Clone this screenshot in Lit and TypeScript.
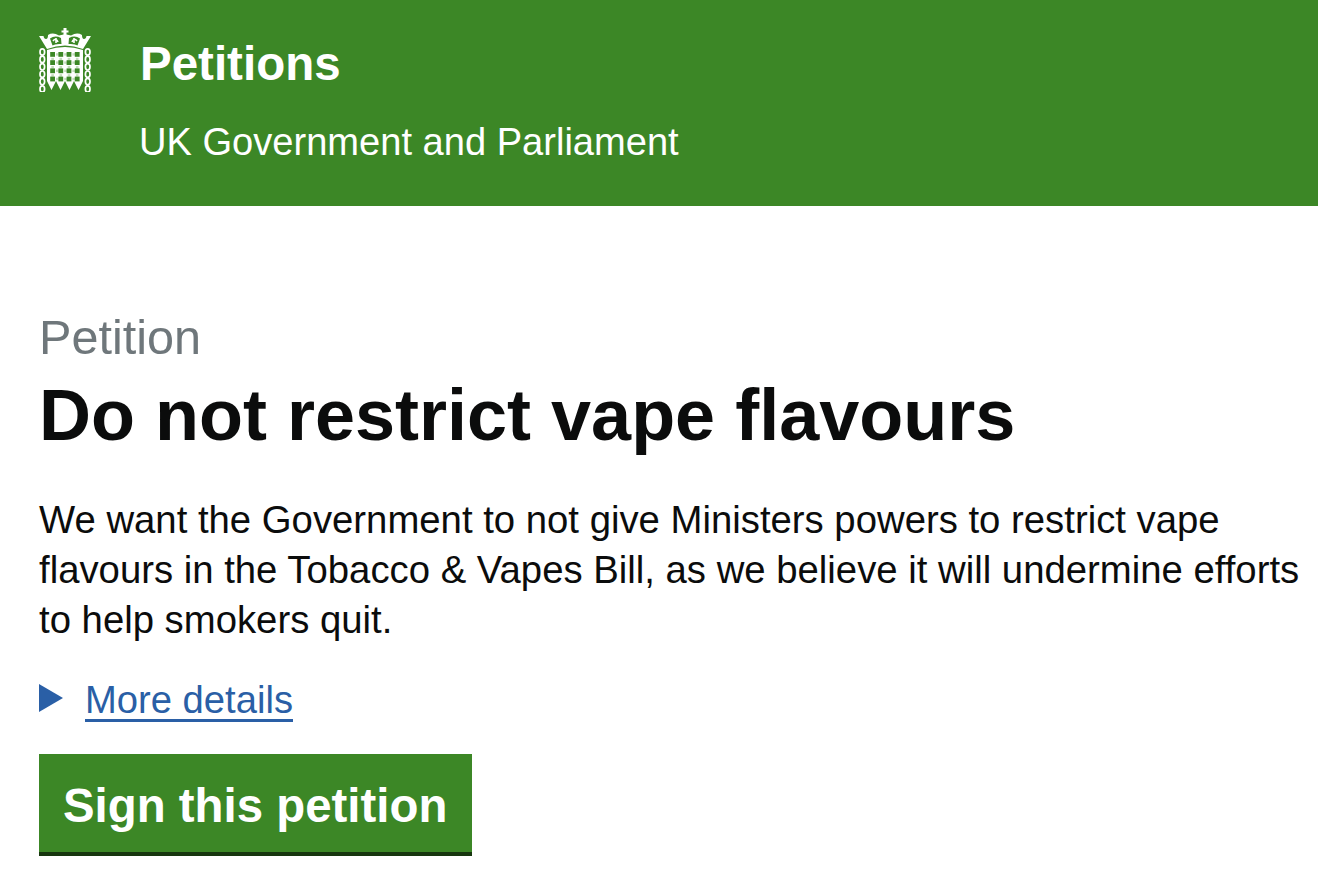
import { LitElement, html, css, svg } from "lit";
import { customElement } from "lit/decorators.js";

const G = "#3c8726";

const holes = () => {
  const out = [];
  for (let r = 0; r < 4; r++) {
    for (let c = 0; c < 4; c++) {
      out.push(svg`<rect x="${11.2 + c * 8.2}" y="${24 + r * 8.2}" width="4.8" height="4.8" fill="${G}"/>`);
    }
  }
  for (let r = 0; r < 4; r++) {
    for (let c = 0; c < 3; c++) {
      out.push(svg`<rect x="${17 + c * 8.2}" y="${25.2 + r * 8.2}" width="2.6" height="2.4" fill="${G}" opacity=".3"/>`);
    }
  }
  for (let r = 0; r < 3; r++) {
    for (let c = 0; c < 4; c++) {
      out.push(svg`<rect x="${12.3 + c * 8.2}" y="${29.8 + r * 8.2}" width="2.6" height="2.4" fill="${G}" opacity=".3"/>`);
    }
  }
  return out;
};

const chain = (x: number) => {
  const out = [];
  for (let i = 0; i < 6; i++) {
    out.push(svg`<ellipse cx="${x}" cy="${24 + i * 7.4}" rx="2.3" ry="3.2" fill="none" stroke="#fff" stroke-width="1.7"/>`);
  }
  return out;
};

const logo = html`<svg class="logo" viewBox="0 0 52 64" width="52" height="64" aria-hidden="true">
  <path fill="#fff" d="M8 22 Q26 16 44 22 V53 L39.5 62 L35 53 L30.5 62 L26 53 L21.5 62 L17 53 L12.5 62 L8 53 Z"/>
  ${holes()}
  ${chain(3.3)}
  ${chain(48.7)}
  <path fill="#fff" d="M0 8 L4.5 8 Q5 11 7 11 Q9 11 9 7 Q14 4 20 7.5 L24.5 6.5 V4.5 H22.5 V2.5 H24.5 V0 H27.5 V2.5 H29.5 V4.5 H27.5 V6.5 L32 7.5 Q38 4 43 7 Q43 11 45 11 Q47 11 47.5 8 L52 8 L44 21 Q26 14 8 21 Z"/>
  <path fill="${G}" d="M11 10.5 Q16 7 22 10 L22.5 16 Q16 15.5 13.5 17.5 Z M41 10.5 Q36 7 30 10 L29.5 16 Q36 15.5 38.5 17.5 Z"/>
  <path fill="none" stroke="#fff" stroke-width="1.6" d="M14 13 Q17 9 19 14 M38 13 Q35 9 33 14 M17 10 V15 M35 10 V15"/>
</svg>`;

@customElement("app-root")
export class AppRoot extends LitElement {
  static styles = css`
    :host {
      display: block;
      font-family: "Liberation Sans", Arial, sans-serif;
      color: #0b0c0c;
      background: #fff;
    }
    .header {
      background: #3c8726;
      color: #fff;
      height: 206px;
      box-sizing: border-box;
      padding: 28px 39px 0;
      display: flex;
      gap: 49px;
    }
    .logo { display: block; flex: none; }
    .service {
      font-size: 47.5px;
      font-weight: 700;
      line-height: 72px;
    }
    .sub {
      font-size: 38.1px;
      line-height: 50px;
      margin-top: 17px;
      margin-left: -1px;
    }
    main { padding: 106px 0 0 39px; }
    .caption { font-size: 48.6px; line-height: 50px; color: #6f777b; }
    h1 {
      margin: 13px 0 0;
      font-size: 72px;
      line-height: 80px;
      font-weight: 700;
      color: #0b0c0c;
    }
    p {
      margin: 40px 0 0;
      font-size: 38.3px;
      line-height: 50px;
      width: 1275px;
    }
    .details {
      display: flex;
      align-items: center;
      gap: 22px;
      margin-top: 30px;
      height: 50px;
      font-size: 38.2px;
      line-height: 50px;
    }
    .tri {
      width: 0; height: 0;
      border-left: 24px solid #2a5fa6;
      border-top: 14px solid transparent;
      border-bottom: 14px solid transparent;
      margin-top: -4px;
    }
    a { color: #2a5fa6; text-decoration: underline; text-underline-offset: 6px; }
    .btn {
      display: table;
      margin-top: 29px;
      background: #3c8726;
      color: #fff;
      font-size: 47.4px;
      font-weight: 700;
      line-height: 92px;
      padding: 6px 25px 0 24px;
      border-bottom: 4px solid #17360f;
    }
  `;

  render() {
    return html`
      <div class="header">
        ${logo}
        <div class="names">
          <div class="service">Petitions</div>
          <div class="sub">UK Government and Parliament</div>
        </div>
      </div>
      <main>
        <div class="caption">Petition</div>
        <h1>Do not restrict vape flavours</h1>
        <p>We want the Government to not give Ministers powers to restrict vape flavours in the Tobacco &amp; Vapes Bill, as we believe it will undermine efforts to help smokers quit.</p>
        <div class="details"><span class="tri"></span><a href="#">More details</a></div>
        <div class="btn">Sign this petition</div>
      </main>
    `;
  }
}
